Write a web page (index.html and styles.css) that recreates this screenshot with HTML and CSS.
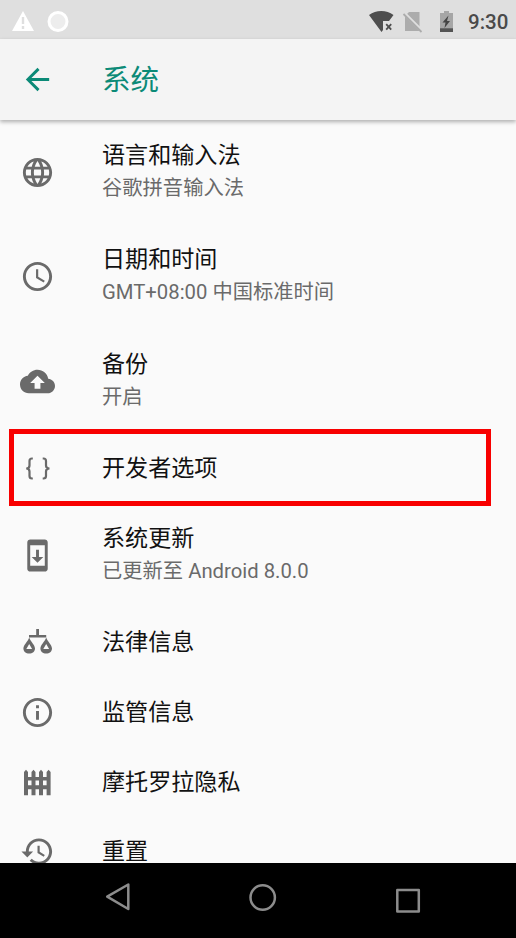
FILE: index.html
```html
<!DOCTYPE html>
<html lang="zh-CN">
<head>
<meta charset="utf-8">
<title>系统</title>
<link rel="stylesheet" href="styles.css">
</head>
<body>
<div class="screen">
  <div class="status">
    <svg class="status-left" width="60" height="24" viewBox="0 0 60 24">
      <path d="M11 2 22 22H0Z" fill="#fff"/>
      <path d="M11 8v7M11 17v3" stroke="#dfdfdf" stroke-width="2.4"/>
      <circle cx="46" cy="12.5" r="9" fill="#ededed" stroke="#fff" stroke-width="3"/>
    </svg>
    <svg class="status-right" width="88" height="24" viewBox="0 0 88 24">
      <path d="M0 6Q5.500 2 12.300 2T24.500 6L20 12H14V21L12.500 23Z" fill="#4e4e4e"/>
      <path d="m17.200 15.200 5 5.500m0-5.500-5 5.500" stroke="#4e4e4e" stroke-width="1.800"/>
      <path d="M40 3h10.500v19H36V7Z" fill="#acacac"/>
      <path d="m35 4 18 18" stroke="#dfdfdf" stroke-width="3.200"/>
      <path d="m34.500 5 18 18" stroke="#acacac" stroke-width="1.800"/>
      <path d="M71 4h4V2h5v2h4v19H71Z" fill="#a6a6a6"/>
      <path d="M71 19.300h13V23H71Z" fill="#545454"/>
      <path d="m79.500 6.500-6 7h3l-1 5.500 5.500-7h-3Z" fill="#454545"/>
    </svg>
    <span class="clock">9:30</span>
  </div>
  <header class="appbar">
    <svg class="back" width="35" height="35" viewBox="0 0 24 24"><path d="M20 11H7.830l5.590-5.590L12 4l-8 8 8 8 1.410-1.410L7.830 13H20v-2z"/></svg>
    <h1>系统</h1>
  </header>
  <main class="list">
    <div class="row tall">
      <svg class="icon" viewBox="0 0 24 24"><path d="M11.990 2C6.470 2 2 6.480 2 12s4.470 10 9.990 10C17.520 22 22 17.520 22 12S17.520 2 11.990 2zm6.930 6h-2.950c-.32-1.250-.78-2.450-1.380-3.560 1.840.63 3.370 1.910 4.330 3.560zM12 4.040c.83 1.200 1.480 2.530 1.910 3.960h-3.820c.43-1.430 1.080-2.760 1.910-3.960zM4.260 14C4.100 13.360 4 12.690 4 12s.1-1.360.26-2h3.380c-.08.66-.14 1.320-.14 2 0 .68.06 1.340.14 2H4.260zm.82 2h2.950c.32 1.250.78 2.450 1.380 3.560-1.840-.63-3.370-1.900-4.330-3.560zm2.950-8H5.080c.96-1.660 2.490-2.930 4.330-3.560C8.810 5.550 8.350 6.750 8.030 8zM12 19.960c-.83-1.200-1.480-2.530-1.910-3.960h3.820c-.43 1.430-1.080 2.760-1.910 3.960zM14.340 14H9.660c-.09-.66-.16-1.320-.16-2 0-.68.07-1.350.16-2h4.680c.09.65.16 1.320.16 2 0 .68-.07 1.340-.16 2zm.25 5.560c.6-1.110 1.060-2.310 1.380-3.560h2.950c-.96 1.650-2.490 2.930-4.330 3.560zM16.360 14c.08-.66.14-1.320.14-2 0-.68-.06-1.340-.14-2h3.380c.16.64.26 1.310.26 2s-.1 1.360-.26 2h-3.380z"/></svg>
      <div class="text"><div class="title">语言和输入法</div><div class="sub">谷歌拼音输入法</div></div>
    </div>
    <div class="row tall">
      <svg class="icon" viewBox="0 0 24 24"><path d="M11.990 2C6.470 2 2 6.480 2 12s4.470 10 9.990 10C17.520 22 22 17.520 22 12S17.520 2 11.990 2zM12 20c-4.420 0-8-3.580-8-8s3.580-8 8-8 8 3.580 8 8-3.580 8-8 8zm.5-13H11v6l5.250 3.150.75-1.230-4.500-2.670z"/></svg>
      <div class="text"><div class="title">日期和时间</div><div class="sub">GMT+08:00 中国标准时间</div></div>
    </div>
    <div class="row tall">
      <svg class="icon" viewBox="0 0 24 24"><path d="M19.350 10.040C18.670 6.590 15.640 4 12 4 9.110 4 6.600 5.640 5.350 8.040 2.340 8.360 0 10.910 0 14c0 3.310 2.690 6 6 6h13c2.760 0 5-2.240 5-5 0-2.640-2.050-4.780-4.650-4.960zM14 13v4h-4v-4H7l5-5 5 5h-3z"/></svg>
      <div class="text"><div class="title">备份</div><div class="sub">开启</div></div>
    </div>
    <div class="row marked">
      <svg class="icon line" viewBox="0 0 35 35"><path d="M12.800 7.500H12Q9.500 7.500 9.500 10v4.500Q9.500 17.500 6.200 17.500 9.500 17.500 9.500 20.500V25Q9.500 27.500 12 27.500h.8M22.700 7.500h.8Q26 7.500 26 10v4.500Q26 17.500 29.500 17.500 26 17.500 26 20.500V25Q26 27.500 23.500 27.500h-.8"/></svg>
      <div class="text"><div class="title">开发者选项</div></div>
    </div>
    <div class="row tall">
      <svg class="icon" viewBox="0 0 24 24"><path d="M17 1.010L7 1c-1.100 0-2 .9-2 2v18c0 1.100.9 2 2 2h10c1.100 0 2-.9 2-2V3c0-1.100-.9-1.990-2-1.990zM17 19H7V5h10v14zm-1-6h-3V8h-2v5H8l4 4 4-4z"/></svg>
      <div class="text"><div class="title">系统更新</div><div class="sub">已更新至 Android 8.0.0</div></div>
    </div>
    <div class="row">
      <svg class="icon" viewBox="0 0 35 35"><path d="M16.200 4h2.800v6h7.200v2.600H9V10h7.200Z"/><path fill-rule="evenodd" d="M9.200 12.500C10.500 16.500 15 20 15 23.500c0 3-2.500 5-5.800 5s-5.800-2-5.800-5C3.400 20 7.900 16.500 9.200 12.500Zm0 6.500-2.900 5h5.800ZM26.200 12.500C27.500 16.500 32 20 32 23.500c0 3-2.500 5-5.800 5s-5.800-2-5.800-5C20.400 20 24.900 16.500 26.200 12.500Zm0 6.500-2.900 5h5.800Z"/></svg>
      <div class="text"><div class="title">法律信息</div></div>
    </div>
    <div class="row">
      <svg class="icon" viewBox="0 0 24 24"><path d="M11 17h2v-6h-2v6zm1-15C6.480 2 2 6.480 2 12s4.480 10 10 10 10-4.480 10-10S17.520 2 12 2zm0 18c-4.410 0-8-3.590-8-8s3.590-8 8-8 8 3.590 8 8-3.590 8-8 8zM11 9h2V7h-2v2z"/></svg>
      <div class="text"><div class="title">监管信息</div></div>
    </div>
    <div class="row">
      <svg class="icon" viewBox="0 0 35 35"><path d="M4 30.300V7L6 4.800 8 7v23.300ZM11.500 30.300V7l2-2.200 2 2.200v23.300ZM19 30.300V7l2-2.200 2 2.200v23.300ZM26.600 30.300V7l2-2.200 2 2.200v23.300ZM4 12h26.600v3.600H4ZM4 20.300h26.600v4H4Z"/></svg>
      <div class="text"><div class="title">摩托罗拉隐私</div></div>
    </div>
    <div class="row">
      <svg class="icon" viewBox="0 0 24 24"><path d="M13 3c-4.970 0-9 4.030-9 9H1l3.890 3.890.07.14L9 12H6c0-3.870 3.130-7 7-7s7 3.130 7 7-3.130 7-7 7c-1.930 0-3.680-.79-4.940-2.060l-1.420 1.420C8.270 19.990 10.510 21 13 21c4.970 0 9-4.030 9-9s-4.030-9-9-9zm-1 5v5l4.280 2.540.72-1.210-3.500-2.080V8H12z"/></svg>
      <div class="text"><div class="title">重置</div></div>
    </div>
  </main>
  <nav class="navbar">
    <svg width="516" height="75" viewBox="0 0 516 75">
      <path d="M128.300 21.500v24.500L107.200 33.700Z"/>
      <circle cx="262.700" cy="34.500" r="12.200"/>
      <rect x="397.300" y="27" width="21.500" height="21.500"/>
    </svg>
  </nav>
</div>
</body>
</html>
```
FILE: styles.css
```css
*, *::after { box-sizing: border-box; }

body {
  margin: 0;
  font-family: Roboto, "Noto Sans CJK SC", sans-serif;
}

.screen {
  display: flex;
  flex-direction: column;
  width: 516px;
  height: 938px;
  overflow: hidden;
  background: #fafafa;
}

.status {
  display: flex;
  align-items: center;
  flex: none;
  height: 39px;
  padding: 4px 8px 0 12px;
  background: #dfdfdf;
}

.status svg { margin-bottom: 1px; }

.status-right { margin-left: auto; }

.clock {
  width: 40px;
  margin-left: 11px;
  font-size: 20.500px;
  font-weight: 500;
  line-height: 24px;
  color: #4a4a4a;
}

.appbar {
  display: flex;
  align-items: center;
  flex: none;
  height: 81px;
  padding-left: 20px;
  background: #f4f4f4;
  box-shadow: 0 2px 4px rgba(0, 0, 0, .3);
  z-index: 1;
}

.back { fill: #0b8a77; }

.appbar h1 {
  margin: 0 0 0 47px;
  padding-top: 3px;
  font-size: 28.500px;
  font-weight: 400;
  line-height: 40px;
  color: #0b8a77;
}

.list {
  flex: 1;
  min-height: 0;
  overflow: hidden;
}

.row {
  position: relative;
  display: flex;
  align-items: center;
  height: 69.700px;
  padding-left: 20px;
}

.tall { height: 104.600px; }

.icon {
  flex: none;
  width: 35px;
  height: 35px;
  fill: #6a6a6a;
}

.line {
  fill: none;
  stroke: #6a6a6a;
  stroke-width: 2.200;
}

.text {
  margin-left: 47px;
  padding-top: 1px;
  white-space: nowrap;
}

.tall .text {
  padding: 0 0 2px;
}

.title {
  font-size: 23.100px;
  line-height: 34px;
  color: #111;
}

.sub {
  margin-top: -1px;
  font-size: 20.300px;
  line-height: 32px;
  color: #6a6a6a;
}

.marked::after {
  content: "";
  position: absolute;
  left: 9px;
  top: -5px;
  width: 482px;
  height: 77px;
  border: 5px solid #f80000;
}

.navbar {
  flex: none;
  height: 75px;
  background: #000;
}

.navbar svg {
  display: block;
  fill: none;
  stroke: #8c8c8c;
  stroke-width: 2.500;
  stroke-linejoin: round;
}
```
